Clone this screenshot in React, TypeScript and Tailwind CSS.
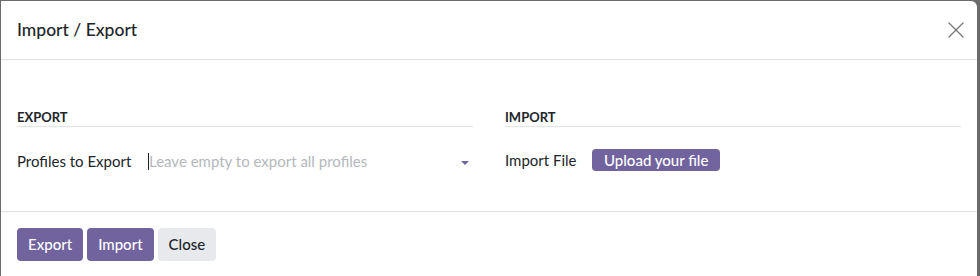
import { X } from "lucide-react";

export default function App() {
  return (
    <div
      className="h-[276px] w-[980px] overflow-hidden bg-[#6b6b6b] pl-px pr-[3px] pt-px"
      style={{ fontFamily: "Lato, 'Noto Sans', sans-serif" }}
    >
      <div className="h-[300px] rounded-tr-md bg-white text-[#212529]">
        {/* Header */}
        <div className="flex h-[59px] items-center justify-between border-b border-[#dee2e6] px-4">
          <h4 className="text-[17.5px] font-medium">Import / Export</h4>
          <button type="button" className="-mr-[9px] text-[#777]">
            <X size={28} strokeWidth={1.1} />
          </button>
        </div>

        {/* Body */}
        <div className="grid h-[152px] grid-cols-2 gap-8 border-b border-[#dee2e6] px-4 pt-[49px]">
          <div>
            <div className="border-b border-[#e4e4e4] text-[13px] leading-[17px] font-bold">
              EXPORT
            </div>
            <div className="mt-[23px] flex items-center">
              <span className="w-[131px] text-[15px]">Profiles to Export</span>
              <div className="flex flex-1 items-center">
                <span className="h-[17px] w-px bg-[#212529]" />
                <span className="flex-1 text-[15px] text-[#b4b8bd]">
                  Leave empty to export all profiles
                </span>
                <span className="mr-[4px] mt-[4px] h-0 w-0 border-x-[4px] border-t-[4px] border-x-transparent border-t-[#71639e]" />
              </div>
            </div>
          </div>
          <div>
            <div className="border-b border-[#e4e4e4] text-[13px] leading-[17px] font-bold">
              IMPORT
            </div>
            <div className="mt-[22px] flex items-center">
              <span className="w-[87px] text-[15px]">Import File</span>
              <button
                type="button"
                className="h-[22px] rounded-[4px] bg-[#71639e] px-[12px] text-[15px] font-medium text-white"
              >
                Upload your file
              </button>
            </div>
          </div>
        </div>

        {/* Footer */}
        <div className="flex gap-1 px-4 pt-4">
          <button
            type="button"
            className="h-[33px] rounded-[4px] bg-[#71639e] px-[11px] text-[15px] font-medium text-white"
          >
            Export
          </button>
          <button
            type="button"
            className="h-[33px] rounded-[4px] bg-[#71639e] px-[11px] text-[15px] font-medium text-white"
          >
            Import
          </button>
          <button
            type="button"
            className="h-[33px] rounded-[4px] bg-[#e7e9ed] px-[11px] text-[15px] font-medium text-[#212529]"
          >
            Close
          </button>
        </div>
      </div>
    </div>
  );
}
